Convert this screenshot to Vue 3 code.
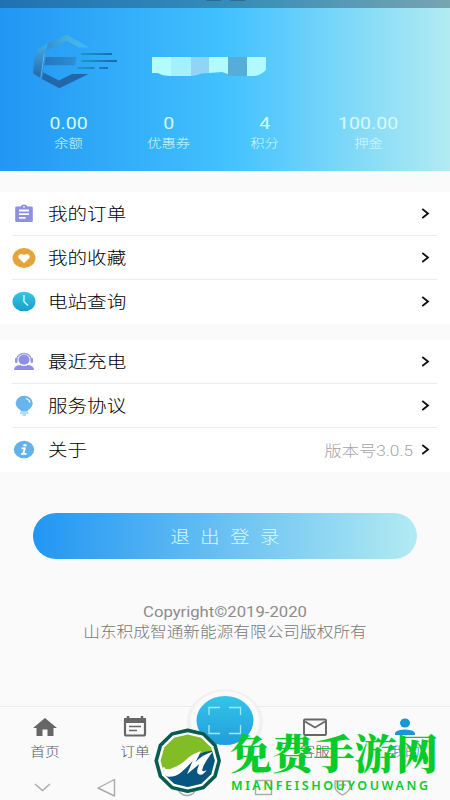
<script setup>
const stats = [
  { value: '0.00', label: '余额', cls: 's1' },
  { value: '0', label: '优惠券', cls: 's2' },
  { value: '4', label: '积分', cls: 's3' },
  { value: '100.00', label: '押金', cls: 's4' },
]
const groups = [
  [
    { icon: 'order', label: '我的订单' },
    { icon: 'heart', label: '我的收藏' },
    { icon: 'clock', label: '电站查询' },
  ],
  [
    { icon: 'user', label: '最近充电' },
    { icon: 'bulb', label: '服务协议' },
    { icon: 'info', label: '关于', extra: '版本号3.0.5' },
  ],
]
</script>

<template>
  <div class="screen">
    <header class="head">
      <div class="status"><i></i><i></i></div>
      <div class="profile">
        <svg class="logo" width="90" height="56" viewBox="0 0 90 56">
          <defs>
            <linearGradient id="lg" x1="0" y1="0" x2="0" y2="1">
              <stop offset="0" stop-color="#43aee6" />
              <stop offset="1" stop-color="#2166a8" />
            </linearGradient>
            <linearGradient id="lt" x1="0" y1="0" x2="1" y2="0">
              <stop offset="0" stop-color="#358fd0" />
              <stop offset=".5" stop-color="#46b0e2" />
              <stop offset="1" stop-color="#42b8f5" />
            </linearGradient>
            <linearGradient id="lm" x1="0" y1="0" x2="1" y2="0">
              <stop offset="0" stop-color="#2575bd" />
              <stop offset="1" stop-color="#2f8fd4" />
            </linearGradient>
            <linearGradient id="ls" gradientUnits="userSpaceOnUse" x1="48" y1="0" x2="84" y2="0">
              <stop offset="0" stop-color="#159ccb" />
              <stop offset="1" stop-color="#1769ac" />
            </linearGradient>
          </defs>
          <path d="M16 9 35 .7 57 13.500H47L35 6.800 15 16Z" fill="url(#lt)" />
          <path d="M5.500 15.500 15.500 10 14 17.500 9.700 44.500 1 39.500 2.300 25.700Z" fill="url(#lg)" />
          <path d="M12.300 20 8.800 44" stroke="#6cc0f5" stroke-width=".8" />
          <path d="M13.700 23H44.500L43 31.300H12.300Z" fill="url(#lm)" />
          <path d="M11.300 38.500 27 46.500 40 40H56.500L27.300 54.300 10 45Z" fill="#2267a9" />
          <g fill="url(#ls)">
            <rect x="49" y="19" width="31" height="2" />
            <rect x="49" y="26" width="36" height="2" />
            <rect x="45.500" y="33" width="17" height="2" />
            <rect x="67" y="33" width="9" height="2" />
          </g>
        </svg>
        <svg class="mask" width="114" height="20" viewBox="0 0 114 20">
          <path d="M0 0H19V19Q10 19 6 16L0 16Z" fill="#b4fbff" />
          <path d="M19 0H39V19H19Z" fill="#a3f0ff" />
          <path d="M39 0H57V16Q49 16 45 18L39 19Z" fill="#91d4f7" />
          <path d="M57 0H76V17L70 15 57 16Z" fill="#b2faff" />
          <path d="M76 0H95V19H76Z" fill="#56add9" />
          <path d="M95 0H114V13Q108 19 101 19H95Z" fill="#b0fbff" />
        </svg>
      </div>
      <div class="stats">
        <div v-for="s in stats" :key="s.label" class="stat" :class="s.cls">
          <b>{{ s.value }}</b><span>{{ s.label }}</span>
        </div>
      </div>
    </header>

    <section v-for="(g, gi) in groups" :key="gi" class="card">
      <div v-for="r in g" :key="r.label" class="row">
        <svg class="ico" width="24" height="22" viewBox="0 0 24 22">
          <g v-if="r.icon === 'order'">
            <path d="M4.500 3.500H8.500Q9.500 1.500 12 1.500T15.500 3.500H19.500Q20.800 3.500 20.800 4.500V18Q20.800 19 19.500 19H4.500Q3.200 19 3.200 18V4.500Q3.200 3.500 4.500 3.500Z" fill="#8f8fe3" />
            <circle cx="12" cy="3.800" r=".9" fill="#fff" />
            <path d="M7 7.500H17M7 11.200H17M7 14.800H13.500" stroke="#fff" stroke-width="1.800" />
          </g>
          <g v-else-if="r.icon === 'heart'">
            <ellipse cx="12" cy="11" rx="11.500" ry="10" fill="#e5a43b" />
            <path d="M12 16.200 7 11.500C4.500 8.500 9 4.800 12 8.300C15 4.800 19.500 8.500 17 11.500Z" fill="#fff" />
          </g>
          <g v-else-if="r.icon === 'clock'">
            <defs>
              <linearGradient id="cg" x1="0" y1="0" x2="0" y2="1">
                <stop offset="0" stop-color="#36c5e5" /><stop offset="1" stop-color="#189fcc" />
              </linearGradient>
            </defs>
            <ellipse cx="12" cy="10.500" rx="11.500" ry="9.800" fill="url(#cg)" />
            <path d="M12 4V10.700L16 14.500" fill="none" stroke="#d9fbff" stroke-width="1.400" />
          </g>
          <g v-else-if="r.icon === 'user'">
            <path d="M4.500 10C4 0 20 0 19.500 10" fill="none" stroke="#a0a0e6" stroke-width="1.400" />
            <rect x="3" y="7" width="2.500" height="5" rx="1" fill="#9797e3" />
            <rect x="18.500" y="7" width="2.500" height="5" rx="1" fill="#9797e3" />
            <ellipse cx="12" cy="8.700" rx="5.500" ry="5" fill="#8e8ee5" />
            <path d="M2 19Q2 14.500 8 14Q12 16 16 14Q22 14.500 22 19Z" fill="#8e8ee5" />
          </g>
          <g v-else-if="r.icon === 'bulb'">
            <ellipse cx="12.200" cy="8.200" rx="8.500" ry="7.400" fill="#67b5ec" />
            <path d="M7.500 13H17L15.500 16.500H9Z" fill="#67b5ec" />
            <path d="M14 3.500Q17.500 4.500 17.800 7.500" fill="none" stroke="#fff" stroke-width="1.200" />
            <path d="M8 18H16.500M10.500 20H14" stroke="#67b5ec" stroke-width="1.200" />
          </g>
          <g v-else>
            <ellipse cx="12" cy="10.600" rx="10.200" ry="8.800" fill="#62b1e8" />
            <ellipse cx="13" cy="6.300" rx="1.700" ry="1.300" fill="#fff" />
            <path d="M9.500 9.300H12.800L11.300 14.800H14.500M9 14.800H12" fill="none" stroke="#fff" stroke-width="1.800" />
          </g>
        </svg>
        <span class="label">{{ r.label }}</span>
        <span v-if="r.extra" class="extra">{{ r.extra }}</span>
        <svg class="chev" width="9" height="11" viewBox="0 0 9 11"><path d="M1.300 1 7 5.500 1.300 10" fill="none" stroke="#111" stroke-width="1.800" /></svg>
      </div>
    </section>

    <button class="logout"><span>退出登录</span></button>
    <footer class="copy">
      <p class="en">Copyright©2019-2020</p>
      <p class="cn">山东积成智通新能源有限公司版权所有</p>
    </footer>

    <nav class="tabs">
      <div class="tab">
        <svg width="26" height="24" viewBox="0 0 26 24"><path d="M13 3 25 13H21.500V21H15.500V14.500H10.500V21H4.500V13H1Z" fill="#666" /></svg>
        <span>首页</span>
      </div>
      <div class="tab">
        <svg width="26" height="24" viewBox="0 0 26 24">
          <path d="M6 1V4M20 1V4" stroke="#666" stroke-width="2.500" />
          <rect x="3" y="4" width="20" height="16.500" rx="1.500" fill="none" stroke="#666" stroke-width="2.200" />
          <path d="M2 3H24V8H2Z" fill="#666" /><path d="M7 11.500H19M7 15.500H15" stroke="#666" stroke-width="1.700" />
        </svg>
        <span>订单</span>
      </div>
      <div class="tab"></div>
      <div class="tab">
        <svg width="26" height="24" viewBox="0 0 26 24"><rect x="2" y="4.500" width="22" height="15.500" rx="1" fill="none" stroke="#666" stroke-width="1.900" /><path d="M3 6.500 13 12.500 23 6.500" fill="none" stroke="#666" stroke-width="1.700" /></svg>
        <span>客服</span>
      </div>
      <div class="tab on">
        <svg width="26" height="24" viewBox="0 0 26 24"><ellipse cx="13" cy="8" rx="5" ry="4.500" fill="#1d93d8" /><path d="M3 20V18.500Q3 15 13 14.500Q23 15 23 18.500V20Z" fill="#1d93d8" /></svg>
        <span>我的</span>
      </div>
      <svg class="scan" width="78" height="68" viewBox="0 0 78 68">
        <defs>
          <linearGradient id="sg" x1="0" y1="0" x2="0" y2="1">
            <stop offset="0" stop-color="#35c5e9" /><stop offset="1" stop-color="#209ddc" />
          </linearGradient>
        </defs>
        <path d="M1 36A38 32.500 0 0 1 77 36Q77 55 60 65H18Q1 55 1 36Z" fill="#f0f0f0" />
        <ellipse cx="39" cy="35" rx="34.500" ry="30" fill="#fafafa" />
        <ellipse cx="39" cy="34.500" rx="28.500" ry="24.500" fill="url(#sg)" />
        <path d="M23 29V21.500H34M43 21.500H54.500V29M54.500 39V47.500H43M34 47.500H23V39" fill="none" stroke="#9cebf5" stroke-width="1.300" />
      </svg>
    </nav>
    <div class="sys">
      <svg width="450" height="34" viewBox="0 0 450 34" fill="none" stroke="#aaa" stroke-width="1.400">
        <path d="M35 18 42.500 24.500 50 18" />
        <path d="M98 22 114.500 13.500V30Z" stroke-linejoin="round" />
        <ellipse cx="187" cy="21.500" rx="9" ry="8" />
        <rect x="255.500" y="14.500" width="16" height="14" />
        <path d="M335 15H350V21Q350 25 342.500 29Q335 25 335 21ZM339 19H346M342.500 17V25" />
      </svg>
    </div>

    <svg class="mark" width="300" height="90" viewBox="150 710 300 90">
      <defs>
        <path id="poly" d="M0-30.500 15.700-26.800 27.300-15.500 31.500 0 27.300 15.500 15.700 26.800 0 30.500-15.700 26.800-27.300 15.500-31.500 0-27.300-15.500-15.700-26.800Z" />
        <clipPath id="disc"><use href="#poly" transform="translate(187.700 760.800) scale(.86)" /></clipPath>
      </defs>
      <g transform="translate(187.700 760.800)">
        <use href="#poly" fill="#075c50" stroke="#075c50" stroke-width="3.500" stroke-linejoin="round" />
        <use href="#poly" fill="#fff" transform="scale(.94)" />
      </g>
      <g clip-path="url(#disc)">
        <path d="M150 724H225V800H150Z" fill="#82bd26" />
        <g transform="translate(150 724) scale(.3333)">
          <path d="M30 152Q75 165 105 125L135 95 165 83 225 75V220H30Z" fill="#075681" />
          <path d="M25 128Q32 136 42 129Q48 140 62 134Q92 124 110 106Q125 90 153 81L137 114Q158 91 188 83Q160 120 157 136Q155 147 170 138Q158 157 146 151Q136 145 148 120L111 151 128 111Q104 137 88 149Q70 162 40 156L25 150Z" fill="#fff" />
        </g>
      </g>
      <text class="brand" transform="translate(230 768.500) scale(1.020 1)" textLength="204">免费手游网</text>
      <text class="latin" x="231" y="790" textLength="197">MIANFEISHOUYOUWANG</text>
    </svg>
  </div>
</template>

<style>
body { background: #fafafa; overflow: hidden; }
</style>
<style scoped>
* { box-sizing: border-box; }
.screen { position: relative; width: 450px; height: 800px; overflow: hidden; background: #fafafa; font-family: Roboto, "Noto Sans CJK SC", sans-serif; font-weight: 300; display: flex; flex-direction: column; }
svg { display: block; flex: none; }
.head { flex: none; height: 171px; background: linear-gradient(90deg, #2196f3 0, #42c2ff 51%, #b2ebf2 100%); color: #d5fbff; }
.status { height: 8px; background: rgba(30, 60, 80, .4); display: flex; justify-content: center; gap: 9px; }
.status i { width: 15px; height: 1px; background: rgba(40, 60, 75, .4); }
.profile { height: 104px; display: flex; padding: 26px 0 0 32px; }
.mask { margin: 23px 0 0 30px; }
.stats { display: flex; }
.stat { display: flex; flex-direction: column; align-items: center; }
.s1 { width: 138px; } .s2 { width: 62px; } .s3 { width: 129px; } .s4 { width: 79px; }
.stat b { font-weight: 400; font-size: 17px; line-height: 23px; transform: scaleX(1.15); }
.stat span { font-size: 12.500px; line-height: 18px; transform: scaleX(1.14); white-space: nowrap; }
.card { flex: none; background: #fff; height: 132px; margin-top: 21px; }
.card + .card { margin-top: 16px; }
.row { height: 44px; margin: 0 13px 0 12px; display: flex; align-items: center; border-bottom: 1px solid #ececec; }
.row:last-child { border-bottom-color: transparent; }
.label { margin-left: 12px; flex: 1; font-size: 17px; line-height: 24px; color: #000; transform: scaleX(1.15); transform-origin: left; }
.extra { font-size: 15px; color: #a5a5a5; transform: scaleX(1.15); transform-origin: right; margin-right: 8px; }
.chev { margin-right: 7px; }
.logout { flex: none; margin: 41px 33px 0; height: 46px; border: 0; border-radius: 23px; background: linear-gradient(90deg, #2196f3, #b2ebf2); color: #d7fbff; font: 300 17px/48px Roboto, "Noto Sans CJK SC", sans-serif; padding: 0; }
.logout span { display: inline-block; transform: scaleX(1.15); letter-spacing: 9px; margin-right: -9px; }
.copy { margin-top: 44px; color: #777; text-align: center; }
.copy p { margin: 0; height: 20px; line-height: 20px; white-space: nowrap; transform: scaleX(1.15); font-size: 14.500px; }
.copy .en { font-weight: 400; color: #8c8c8c; }
.tabs { position: absolute; left: 0; top: 706px; width: 450px; height: 60px; border-top: 1px solid #ebebeb; display: flex; }
.tab { width: 90px; display: flex; flex-direction: column; align-items: center; padding-top: 8px; color: #555; }
.tab span { font-size: 13px; line-height: 18px; margin-top: 4px; transform: scaleX(1.14); }
.tab.on span { color: #1d73c8; }
.scan { position: absolute; left: 186px; top: -21px; }
.sys { position: absolute; left: 0; top: 766px; }
.mark { position: absolute; left: 150px; top: 710px; }
.brand { font-family: "Noto Serif CJK SC", "Noto Sans CJK SC", serif; font-weight: 900; font-size: 41px; fill: #06cb2c; }
.latin { font-family: "Noto Sans", sans-serif; font-weight: 600; font-size: 12.500px; fill: #06cb2c; }
</style>
